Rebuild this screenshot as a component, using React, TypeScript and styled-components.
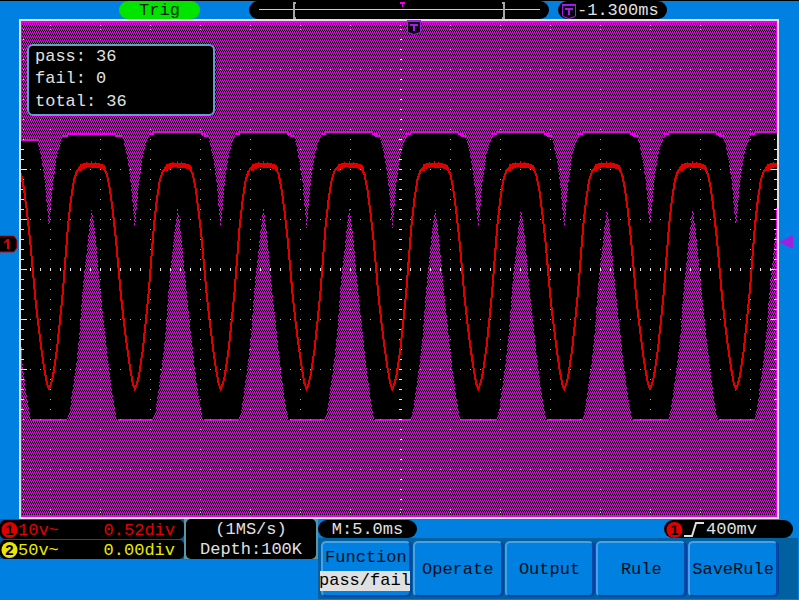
import React from "react";
import styled, { createGlobalStyle, css } from "styled-components";

const BLUE = "#0080e0";
const MAGENTA = "#e800e8";
const RED = "#e00000";
const YELLOW = "#e8e800";
const PURPLE = "#a020e0";

const GlobalStyle = createGlobalStyle`
  * { box-sizing: border-box; }
  body { margin: 0; background: ${BLUE}; }
`;

const Screen = styled.main`
  display: flex;
  flex-direction: column;
  min-height: 100vh;
  background: ${BLUE};
  border-top: 1px solid #000;
  color: #e0e0e0;
  font: 17px/18px "Liberation Mono", monospace;
  white-space: pre;
`;

const TopBar = styled.header`
  display: flex;
  height: 18px;
  padding-left: 119px;
`;

const Pill = styled.div<{ $width: number; $color?: string; $gap?: number }>`
  display: flex;
  align-items: center;
  flex: none;
  width: ${(p) => p.$width}px;
  height: 18px;
  margin-right: ${(p) => p.$gap ?? 0}px;
  border-radius: 9px;
  background: ${(p) => p.$color ?? "#000"};
`;

const CenteredPill = styled(Pill)`
  justify-content: center;
  padding-top: 2px;
`;

const TrigPill = styled(CenteredPill)`
  color: #002800;
`;

const OffsetPill = styled(Pill)`
  padding: 2px 0 0 4px;
  gap: 1px;
`;

const TriggerPill = styled(Pill)`
  padding: 2px 0 0 2px;
  gap: 1px;
`;

const Middle = styled.section`
  display: grid;
  grid-template-columns: 19px minmax(0, 1fr) 20px;
  flex: 1;
  min-height: 300px;
`;

const Gutter = styled.div`
  position: relative;
`;

const LevelMarker = styled.svg<{ $level: number }>`
  position: absolute;
  left: 0;
  top: ${(p) => p.$level}%;
  display: block;
  transform: translateY(-50%);
`;

const Display = styled.div`
  position: relative;
  border: 2px solid #e0e0e0;
  background: #000;
`;

const Plot = styled.svg`
  position: absolute;
  inset: 0;
  width: 100%;
  height: 100%;
  display: block;
`;

const TriggerPosition = styled.div`
  position: absolute;
  left: 51%;
  top: -1px;
  line-height: 0;
`;

const Results = styled.dl`
  position: absolute;
  left: 6px;
  top: 23px;
  width: 188px;
  margin: 0;
  padding: 0 0 0 6px;
  border: 2px solid #60a0c8;
  border-radius: 6px;
  background: #000;
`;

const ResultRow = styled.div`
  display: flex;
  gap: 10px;
  line-height: 22px;
  dt, dd { margin: 0; }
  &:last-child { line-height: 24px; }
`;

const BottomBar = styled.footer`
  display: flex;
  height: 81px;
`;

const Status = styled.div`
  display: flex;
  gap: 2px;
  height: 40px;
  padding-right: 2px;
  background: #5c96a4;
`;

const Channels = styled.div`
  display: grid;
  grid-template-rows: 1fr 1fr;
  width: 184px;
  background: #0058a0;
  gap: 1px;
  padding-top: 1px;
  line-height: 16px;
`;

const panel = css`
  background: #000;
  border-radius: 5px;
`;

const Channel = styled.div<{ $color: string }>`
  ${panel}
  display: flex;
  align-items: center;
  padding: 2px 9px 0 1px;
  color: ${(p) => p.$color};
`;

const ChannelOffset = styled.span`
  margin-left: auto;
`;

const Sampling = styled.div`
  ${panel}
  display: flex;
  flex-direction: column;
  align-items: center;
  width: 130px;
  padding-top: 1px;
  line-height: 20px;
`;

const Right = styled.div`
  display: flex;
  flex-direction: column;
  flex: 1;
  min-width: 0;
`;

const Timing = styled.div`
  display: flex;
  justify-content: space-between;
  padding: 1px 6px 0 0;
`;

const Menu = styled.nav`
  display: flex;
  flex: 1;
  gap: 2px;
  margin: 0 1px 1px 0;
  padding: 3px 20px 2px 3px;
  background: #0060a0;
`;

const MenuButton = styled.button`
  display: flex;
  flex-direction: column;
  align-items: center;
  justify-content: center;
  flex: 1 1 0;
  min-width: 0;
  padding: 2px 0 0;
  border: 2px solid;
  border-color: #48a0e8 #0048a0 #0048a0 #48a0e8;
  border-radius: 5px;
  background: ${BLUE};
  color: #001020;
  font: inherit;
  white-space: nowrap;
  box-shadow: 1px 0 0 #0040a8;
`;

const MenuValue = styled.span`
  display: flex;
  justify-content: center;
  align-self: stretch;
  margin: 4px -1px 0 -3px;
  background: #e0e0e0;
  color: #000;
  line-height: 20px;
`;

const PERIOD = 85.86;
const FIRST_DIP = 49;
const FIRST_PEAK = 91.8;
const CYCLES = [-1, 0, 1, 2, 3, 4, 5, 6, 7, 8, 9];

type Point = [number, number];

const DIP_LEFT: Point[] = [[-20, 132], [-18, 136], [-13, 137], [-11, 142], [-7, 162], [-4, 184], [-2, 207]];
const DIP_RIGHT: Point[] = [[0, 229], [2, 207], [4, 184], [8, 156], [11, 145], [14, 137], [19, 132]];
const SPIKE: Point[] = [
  [-25, 420], [-22, 410], [-19, 388], [-15, 359], [-12, 330], [-10, 300], [-8, 277], [-5, 250], [-3, 230], [0, 208],
  [3, 230], [5, 250], [7, 273], [9, 293], [11, 312], [14, 340], [17, 367], [21, 397], [25, 420],
];
const FALL: Point[] = [
  [-32, 167], [-28, 174], [-25, 189], [-22, 212], [-19, 239], [-16, 272], [-14, 295], [-11, 322], [-8, 346], [-5, 367], [-2, 384],
];
const RISE: Point[] = [
  [0, 389], [2, 384], [4, 376], [8, 349], [11, 320], [14, 290], [16, 264], [19, 226], [22, 199], [25, 180], [28, 171], [32, 166],
];
const CREST = "M31 164h3v-1h17v1h3v1h2v2h1v3h-3v-1h-3v-1h-4v-1h-3v1h-2v-1h-4v1h-2v1h-3v2h-3zM37 162h1v2h-1zM42 161h1v2h-1zM46 162h1v2h-1z";

const shift = (points: Point[], dx: number): Point[] => points.map(([x, y]) => [x + dx, y]);
const line = (points: Point[]) => points.map(([x, y]) => `${x.toFixed(1)},${y}`).join(" ");

const dips = CYCLES.map((n) => FIRST_DIP + n * PERIOD);
const plateauHeight = (dip: number, y: number) => {
  if (dip < 60 && y < 140) return 140;
  if (dip < 140 && y === 132) return 134;
  return y;
};

const upperMask: Point[] = [
  [0, 20],
  ...dips.flatMap((dip) => [
    ...shift(DIP_LEFT, dip).map(([x, y]): Point => [x, plateauHeight(dip, y)]),
    ...shift(DIP_RIGHT, dip).map(([x, y]): Point => [x, dip < 60 && dip > 0 && y === 132 ? 134 : y]),
  ]),
  [900, 20],
];

const lowerMask: Point[] = [
  [0, 520],
  ...CYCLES.flatMap((n) => shift(SPIKE, FIRST_PEAK + n * PERIOD)),
  [900, 520],
];

const trace: Point[] = dips.flatMap((dip) => [
  ...shift(FALL, dip),
  ...shift(RISE, dip),
]);

const range = (from: number, to: number, step: number) =>
  Array.from({ length: Math.floor((to - from) / step) + 1 }, (_, i) => from + i * step);

const rect = (x: number, y: number, w: number, h: number) => `M${x} ${y}h${w}v${h}h${-w}z`;

const gridDots = [
  ...range(50, 750, 50).flatMap((x) => range(29, 509, 10).map((y) => rect(x, y, 1, 1))),
  ...range(69, 469, 50).flatMap((y) => range(30, 770, 10).map((x) => rect(x, y, 1, 1))),
].join("");

const gridTicks = [
  ...range(30, 770, 10).map((x) => rect(x, 268, 1, 3)),
  ...range(29, 509, 10).map((y) => (y > 130 && y < 420 ? rect(399, y, 3, 1) : rect(400, y, 2, 1))),
  ...range(29, 509, 10).map((y) => {
    if (y < 140 || y > 410) return rect(23, y, 1, 1) + rect(774, y, 1, 1);
    const long = (y - 19) % 50 === 0;
    return long ? rect(21, y, 6, 1) + rect(771, y, 6, 1) : rect(21, y, 3, 1) + rect(774, y, 3, 1);
  }),
  ...range(50, 750, 50).map((x) => rect(x, 25, 1, 1) + rect(x, 512, 1, 1)),
].join("");

function Waveform() {
  return (
    <Plot viewBox="21 21 756 496" preserveAspectRatio="none" shapeRendering="crispEdges" role="img" aria-label="Channel 1 waveform inside the pass/fail mask">
      <defs>
        <pattern id="weave" x="21" y="21" width="2" height="4" patternUnits="userSpaceOnUse">
          <rect width="1" height="2" fill={MAGENTA} />
          <rect x="1" y="2" width="1" height="2" fill={MAGENTA} />
        </pattern>
      </defs>
      <polygon points={line(upperMask)} fill="url(#weave)" />
      <polygon points={line(lowerMask)} fill="url(#weave)" />
      <g fill="none" stroke={MAGENTA} strokeWidth="2">
        <path d="M21 140H38" />
        {dips.slice(1).map((dip, i) => {
          const y = i === 0 ? 134 : 132;
          const next = dip + PERIOD;
          return (
            <React.Fragment key={dip}>
              <path d={`M${dip + 18} ${y}H${next - 19}`} />
              <path d={`M${dip + 14} ${y + 2}h5M${next - 20} ${y === 134 ? 136 : 134}h5M${next - 17} 136h5`} />
              <path d={`M${dip - 17} 420H${dip + 18}`} />
            </React.Fragment>
          );
        })}
      </g>
      <path d={rect(21, 21, 756, 2) + rect(21, 515, 756, 2) + rect(21, 21, 1, 120) + rect(21, 347, 1, 170) + rect(776, 21, 1, 110) + rect(776, 208, 1, 309)} fill={MAGENTA} />
      <path d={gridDots} fill="#a8a0a8" />
      <path d={gridTicks} fill="#e8e0e8" />
      <polyline points={line(trace)} fill="none" stroke={RED} strokeWidth="2" />
      {dips.map((dip) => (
        <path key={dip} d={CREST} transform={`translate(${Math.round(dip)} 0)`} fill={RED} />
      ))}
    </Plot>
  );
}

function Shield() {
  return (
    <svg width="14" height="15" viewBox="0 0 14 15" aria-hidden="true">
      <path d="M0 0H14V12L11 14L7 15L3 14L0 12Z" fill={PURPLE} />
      <path d="M1 2H13V12L10 13L7 14L4 13L1 12Z" fill="#080010" />
      <path d="M3 4H11V6H8V11H6V6H3Z" fill={PURPLE} shapeRendering="crispEdges" />
    </svg>
  );
}

function ChannelBadge({ channel, color }: { channel: number; color: string }) {
  return (
    <svg width="17" height="17" viewBox="0 0 17 17" role="img" aria-label={`Channel ${channel}`}>
      <circle cx="8.5" cy="8" r="8" fill={color} />
      <text x="8.5" y="13" textAnchor="middle" fontFamily="Liberation Sans, sans-serif" fontSize="15" fontWeight="700" fill="#000">
        {channel}
      </text>
    </svg>
  );
}

function MemoryBar() {
  return (
    <svg width="300" height="18" viewBox="249 1 300 18" shapeRendering="crispEdges" role="img" aria-label="Record position">
      <path d="M259 9H540V10H259Z" fill={YELLOW} />
      <path d="M293 2H296V4H295V17H296V19H293ZM505 2H502V4H503V17H502V19H505Z" fill="#a8a8a8" />
      <path d="M400 2H405V4H403V7H402V4H400Z" fill={MAGENTA} />
    </svg>
  );
}

export default function App() {
  return (
    <>
      <GlobalStyle />
      <Screen>
        <TopBar>
          <TrigPill $width={81} $color="#00e400" $gap={49}>Trig</TrigPill>
          <Pill $width={300} $gap={9}>
            <MemoryBar />
          </Pill>
          <OffsetPill $width={109}>
            <Shield />
            <span>-1.300ms</span>
          </OffsetPill>
        </TopBar>

        <Middle>
          <Gutter>
            <LevelMarker $level={45} width="19" height="18" viewBox="0 0 19 18" role="img" aria-label="Channel 1 zero level">
              <path d="M-2 1H14L17 5V13L14 17H-2Z" fill="#000" stroke={RED} />
              <path d="M4 7L7 4H9V14H7V7L4 8Z" fill={RED} />
            </LevelMarker>
          </Gutter>
          <Display>
            <Waveform />
            <TriggerPosition>
              <Shield />
            </TriggerPosition>
            <Results>
              <ResultRow><dt>pass:</dt><dd>36</dd></ResultRow>
              <ResultRow><dt>fail:</dt><dd>0</dd></ResultRow>
              <ResultRow><dt>total:</dt><dd>36</dd></ResultRow>
            </Results>
          </Display>
          <Gutter>
            <LevelMarker $level={44.6} width="14" height="12" viewBox="0 0 14 12" role="img" aria-label="Trigger level">
              <path d="M0 6L12 0H14V12H12Z" fill={PURPLE} />
            </LevelMarker>
          </Gutter>
        </Middle>

        <BottomBar>
          <Status>
            <Channels>
              <Channel $color={RED}>
                <ChannelBadge channel={1} color={RED} />
                <span>10v~</span>
                <ChannelOffset>0.52div</ChannelOffset>
              </Channel>
              <Channel $color={YELLOW}>
                <ChannelBadge channel={2} color={YELLOW} />
                <span>50v~</span>
                <ChannelOffset>0.00div</ChannelOffset>
              </Channel>
            </Channels>
            <Sampling>
              <span>(1MS/s)</span>
              <span>Depth:100K</span>
            </Sampling>
          </Status>
          <Right>
            <Timing>
              <CenteredPill $width={99}>M:5.0ms</CenteredPill>
              <TriggerPill $width={129}>
                <ChannelBadge channel={1} color={RED} />
                <svg width="21" height="16" viewBox="0 0 21 16" role="img" aria-label="Rising edge">
                  <path d="M0 14H8L12 1H20" fill="none" stroke="#e0e0e0" strokeWidth="2" />
                </svg>
                <span>400mv</span>
              </TriggerPill>
            </Timing>
            <Menu aria-label="Pass/fail menu">
              <MenuButton type="button">
                <span>Function</span>
                <MenuValue>pass/fail</MenuValue>
              </MenuButton>
              <MenuButton type="button">Operate</MenuButton>
              <MenuButton type="button">Output</MenuButton>
              <MenuButton type="button">Rule</MenuButton>
              <MenuButton type="button">SaveRule</MenuButton>
            </Menu>
          </Right>
        </BottomBar>
      </Screen>
    </>
  );
}
